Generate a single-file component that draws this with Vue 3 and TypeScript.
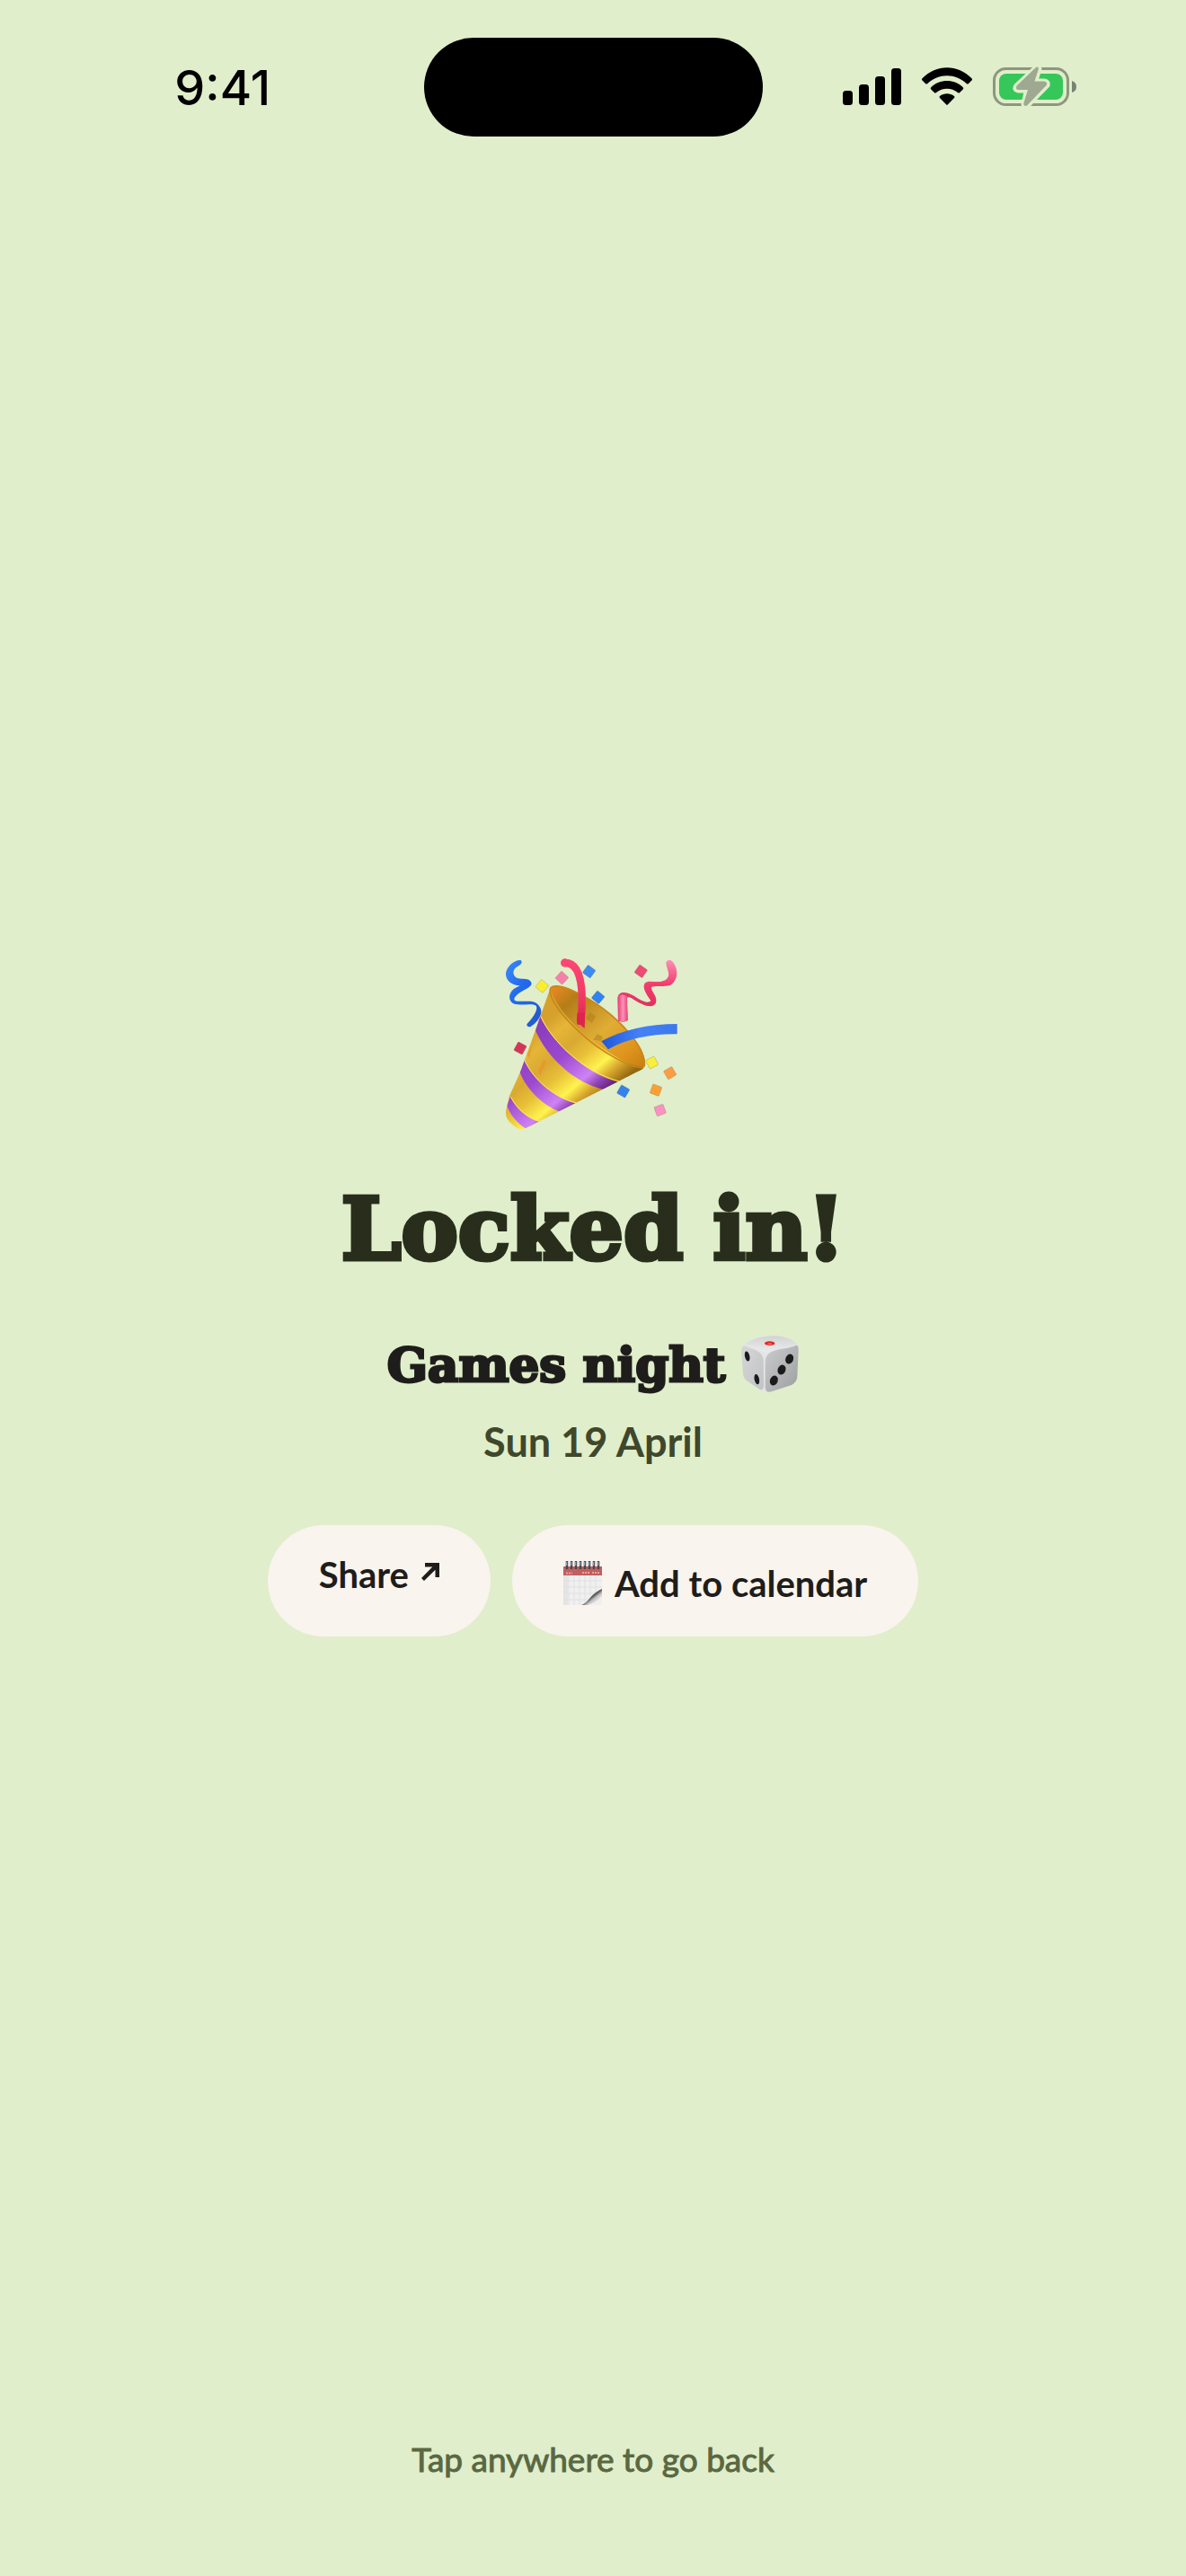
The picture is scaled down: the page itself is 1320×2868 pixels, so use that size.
<script setup lang="ts">
import { ref } from 'vue'

interface Piece {
  x: number
  y: number
  angle: number
  fill: string
}

const eventName = ref('Games night')
const eventDate = ref('Sun 19 April')

const confetti: Piece[] = [
  { x: 190, y: 171, angle: 40, fill: '#fbee2c' },
  { x: 256, y: 143, angle: 43, fill: '#f97fab' },
  { x: 347, y: 122, angle: 36, fill: '#3c8bf4' },
  { x: 377, y: 208, angle: 40, fill: '#2f83f5' },
  { x: 520, y: 121, angle: 35, fill: '#ee4a74' },
  { x: 117, y: 378, angle: 28, fill: '#d63459' },
  { x: 557, y: 426, angle: 62, fill: '#f9ee3a' },
  { x: 617, y: 461, angle: 60, fill: '#fb9d45' },
  { x: 570, y: 518, angle: 20, fill: '#fca033' },
  { x: 461, y: 522, angle: 30, fill: '#3482ee' },
  { x: 584, y: 585, angle: 70, fill: '#fb92c2' },
]

const bars = [
  { x: 0, h: 16 },
  { x: 18, h: 23 },
  { x: 36, h: 32 },
  { x: 54, h: 41 },
]

const rings = [0, 1, 2, 3, 4, 5, 6, 7].map((i) => 3 + i * 5)
</script>

<template>
  <div class="screen">
    <header class="status">
      <time class="clock">9:41</time>
      <div class="island"></div>
      <div class="indicators">
        <svg class="signal" viewBox="0 0 65 43" aria-label="Signal">
          <rect v-for="b in bars" :key="b.x" :x="b.x" :y="42 - b.h" width="11" :height="b.h" rx="3.5" />
        </svg>
        <svg class="wifi" viewBox="0 0 58 43" aria-label="Wi-Fi">
          <path d="M1.5 12.2C17-3.9 41-3.9 56.500 12.200Q57.700 13.500 56.500 14.600L53 18Q51.800 19 50.700 18C38.500 6.400 19.500 6.400 7.300 18Q6.200 19 5 18L1.500 14.600Q.3 13.500 1.500 12.200Z" />
          <path d="M11.200 22.200C21 12.700 37 12.700 46.800 22.200Q47.900 23.300 46.800 24.400L43.200 28Q42.100 29 41 28C34 22.200 24 22.200 17 28Q15.900 29 14.800 28L11.200 24.400Q10.100 23.300 11.200 22.200Z" />
          <path d="M21 32C25.500 28.300 32.500 28.300 37 32Q38.100 33 37 34L30 41.200Q29 42.200 28 41.200L21 34Q19.900 33 21 32Z" />
        </svg>
        <svg class="battery" viewBox="0 0 94 47" aria-label="Battery charging">
          <rect x="1.500" y="3.500" width="82" height="40" rx="13" fill="none" stroke="#8d967e" stroke-width="3" />
          <rect x="7" y="9" width="71" height="29" rx="8" fill="#35c759" />
          <path d="M88 17Q93 18.500 93 23.500T88 30Z" fill="#7b8370" />
          <path d="M48.500 2 26 23Q24 27 28 27.500H38L34.500 43Q36 47 39 44L60.500 22Q61.500 18 57.500 17.500H47L51.500 4Q51 1 48.500 2Z" fill="#9fa991" stroke="#e0eecb" stroke-width="6" stroke-linejoin="round" />
          <path d="M48 2 26.500 22.500Q25 26.500 28 27H39L34 43Q36 46.500 38.500 44L60 21.500Q61 18 57 17.500H46.500L51 3.500Q50.500 .5 48 2Z" fill="#9fa991" />
        </svg>
      </div>
    </header>

    <main class="content">
      <svg class="popper" viewBox="0 0 720 720" role="img" aria-label="Party popper">
        <defs>
          <linearGradient id="gold" gradientUnits="userSpaceOnUse" x1="155" y1="330" x2="360" y2="570">
            <stop offset="0" stop-color="#d6a02c" />
            <stop offset=".16" stop-color="#e5b637" />
            <stop offset=".35" stop-color="#d9a932" />
            <stop offset=".52" stop-color="#e8bf38" />
            <stop offset=".72" stop-color="#fff34f" />
            <stop offset=".84" stop-color="#dbab30" />
            <stop offset="1" stop-color="#96680f" />
          </linearGradient>
          <linearGradient id="violet" gradientUnits="userSpaceOnUse" x1="155" y1="330" x2="360" y2="570">
            <stop offset="0" stop-color="#8b3dbd" />
            <stop offset=".4" stop-color="#9c49ce" />
            <stop offset=".72" stop-color="#cf82f4" />
            <stop offset=".84" stop-color="#9146b5" />
            <stop offset="1" stop-color="#591672" />
          </linearGradient>
          <linearGradient id="inside" x1="0" y1="0" x2="1" y2="1">
            <stop offset="0" stop-color="#f08a25" />
            <stop offset=".2" stop-color="#b57d18" />
            <stop offset=".55" stop-color="#dfad35" />
            <stop offset=".8" stop-color="#e0951e" />
            <stop offset="1" stop-color="#c77e10" />
          </linearGradient>
          <linearGradient id="red" x1="0" y1="0" x2="0" y2="1">
            <stop offset="0" stop-color="#fc4772" />
            <stop offset=".6" stop-color="#ef3764" />
            <stop offset="1" stop-color="#d91f4b" />
          </linearGradient>
          <linearGradient id="blue" x1="0" y1="0" x2="1" y2="0">
            <stop offset="0" stop-color="#2058d8" />
            <stop offset=".5" stop-color="#4580f8" />
            <stop offset="1" stop-color="#3c78ec" />
          </linearGradient>
          <linearGradient id="azure" x1="0" y1="0" x2="1" y2="1">
            <stop offset="0" stop-color="#3c8bfb" />
            <stop offset=".4" stop-color="#236aed" />
            <stop offset="1" stop-color="#2359c9" />
          </linearGradient>
          <linearGradient id="rose" x1="0" y1="0" x2="0" y2="1">
            <stop offset="0" stop-color="#fc91b5" />
            <stop offset=".4" stop-color="#f13c6d" />
            <stop offset="1" stop-color="#d62954" />
          </linearGradient>
          <linearGradient id="tail" x1="0" y1="0" x2="1" y2="0">
            <stop offset="0" stop-color="#e94576" />
            <stop offset=".5" stop-color="#fb91b8" />
            <stop offset="1" stop-color="#e94576" />
          </linearGradient>
          <clipPath id="coneShape">
            <path d="M218 176C230 230 295 310 385 373C435 410 495 440 530 441C529 447 520 452 508 457L176 625L142 643Q118 657 94 636Q66 614 69 588L80 540L118 455L160 340Z" />
          </clipPath>
        </defs>

        <path d="M217 181C223 164 260 167 313 196C385 233 455 290 502 355C535 400 542 439 526 442C495 449 390 397 317 326C252 267 210 210 217 181Z" fill="url(#inside)" />
        <path d="M336 278l14-20 20 14-14 22zM360 350l14-20 18 10-4 14z" fill="#a8781d" opacity=".45" />
        <g clip-path="url(#coneShape)">
          <path d="M50 150H550V680H50Z" fill="url(#gold)" />
          <path d="M183 270C220 355 330 460 443 491L395 516C300 495 205 408 168 319Z" fill="url(#violet)" />
          <path d="M129 415C160 485 230 545 307 564L250 590C190 569 132 510 113 450Z" fill="url(#violet)" />
          <path d="M84 540C102 580 142 615 182 624L134 646C105 626 83 600 73 570Z" fill="url(#violet)" />
          <g fill="none" stroke="#ffe76b" stroke-width="3">
            <path d="M186 272C222 355 330 458 448 489M131 417C162 485 230 543 309 562M85 540C105 580 143 613 184 622" />
          </g>
          <path d="M178 455l18-40 8 8-21 49zM140 400l17-38-8 50z" fill="#f28a25" opacity=".5" />
        </g>
        <path d="M217 181C222 164 260 167 313 196C385 233 455 290 502 355C530 393 540 438 526 442C495 448 390 395 317 326C252 267 212 210 217 181Z" fill="none" stroke="#c88717" stroke-width="5" />

        <path d="M266 93C305 92 320 135 323 198Q324 250 319 300" fill="none" stroke="url(#red)" stroke-width="25" />
        <circle cx="266" cy="93" r="14" fill="#fc4772" />
        <path d="M306 290L332 312 333 260H307Z" fill="#df234f" />
        <path d="M388 355C455 318 545 297 641 297V331C550 330 471 347 411 382Z" fill="url(#blue)" />

        <path d="M119 84C128 94 116 101 104 107C88 120 93 140 110 145C124 149 145 142 154 158C160 177 116 183 98 209C91 229 129 218 157 222C177 226 189 245 187 259C184 280 165 299 152 306Q139 309 139 298C160 276 176 252 171 238C164 227 134 235 108 232C83 231 75 208 86 191C96 176 109 174 116 169C89 169 68 151 69 130C69 108 96 82 119 84Z" fill="url(#azure)" />
        <path d="M604 91C613 76 626 83 634 102C645 125 640 148 625 163C609 178 573 166 555 174C552 188 579 205 569 229C557 248 520 231 500 218C484 206 476 205 473 211L476 285Q460 295 444 286L442 211C445 185 472 190 491 200C515 214 542 233 553 220C543 202 522 179 533 161C546 147 576 164 601 151C626 135 603 113 604 91Z" fill="url(#rose)" />
        <path d="M444 205Q458 194 474 205L476 285Q460 293 444 286Z" fill="url(#tail)" />

        <rect
          v-for="(p, i) in confetti"
          :key="i"
          :x="p.x - 16"
          :y="p.y - 16"
          width="32"
          height="32"
          rx="3"
          :fill="p.fill"
          stroke="#6b5b30"
          stroke-opacity=".35"
          stroke-width="2"
          :transform="`rotate(${p.angle} ${p.x} ${p.y})`"
        />
      </svg>

      <h1 class="title">Locked in!</h1>

      <h2 class="event">
        <span>{{ eventName }}</span>
        <svg class="die" viewBox="0 0 192 192" role="img" aria-label="Game die">
          <defs>
            <linearGradient id="dieTop" x1="0" y1="0" x2="0" y2="1">
              <stop offset="0" stop-color="#d2d3d2" />
              <stop offset="1" stop-color="#ebecec" />
            </linearGradient>
            <linearGradient id="dieLeft" x1="0" y1="0" x2="1" y2="1">
              <stop offset="0" stop-color="#d5d6d6" />
              <stop offset="1" stop-color="#c2c3c4" />
            </linearGradient>
            <linearGradient id="dieRight" x1="0" y1="0" x2="1" y2="1">
              <stop offset="0" stop-color="#cbcccd" />
              <stop offset="1" stop-color="#9d9e9f" />
            </linearGradient>
          </defs>
          <path d="M20 20C45 6 80 0 112 1C142 2 168 10 183 24Q192 31 192 48L187 137Q185 156 168 165L101 188Q82 194 65 184L22 154Q8 145 6 129L0 53Q-1 32 20 20Z" fill="#e4e5e5" />
          <path d="M11 29C38 10 76 1 112 1C142 2 174 13 187 29C160 39 127 39 106 48Q88 57 79 55C54 49 31 37 11 29Z" fill="url(#dieTop)" />
          <path d="M3 40C5 31 11 34 31 42C56 50 74 60 74 83L75 169Q74 184 62 180L22 153Q8 144 6 128L0 53Z" fill="url(#dieLeft)" />
          <path d="M191 48L187 137Q185 156 168 165L101 187Q82 193 80 174V85C82 65 93 56 112 50C140 42 164 42 180 34Q191 28 191 48Z" fill="url(#dieRight)" />
          <ellipse cx="95" cy="26" rx="17" ry="7" fill="#df2524" />
          <ellipse cx="95" cy="28" rx="8" ry="3" fill="#ff6b5a" />
          <g fill="#1b1b1b">
            <ellipse cx="20" cy="69" rx="8" ry="17" transform="rotate(-12 20 69)" />
            <ellipse cx="52" cy="146" rx="8" ry="17" transform="rotate(-12 52 146)" />
            <ellipse cx="161" cy="78" rx="13" ry="17" transform="rotate(20 161 78)" />
            <ellipse cx="135" cy="114" rx="13" ry="17" transform="rotate(20 135 114)" />
            <ellipse cx="109" cy="150" rx="13" ry="17" transform="rotate(20 109 150)" />
          </g>
        </svg>
      </h2>

      <p class="date">{{ eventDate }}</p>

      <div class="actions">
        <button type="button" class="pill share">
          <span>Share</span>
          <svg class="arrow" viewBox="0 0 20 20" aria-hidden="true">
            <path d="M4 0H20V16H15.500V7.700L3 20 0 17 12.300 4.500H4Z" fill="#1f1d1b" />
          </svg>
        </button>
        <button type="button" class="pill">
          <svg class="calendar" viewBox="0 0 43 49" aria-hidden="true">
            <defs>
              <linearGradient id="curl" x1="0" y1="0" x2="1" y2="1">
                <stop offset=".3" stop-color="#f4f4f4" />
                <stop offset=".5" stop-color="#555" />
                <stop offset=".62" stop-color="#c4c4c4" />
                <stop offset=".85" stop-color="#f7f5f2" />
              </linearGradient>
            </defs>
            <rect y="6" width="43" height="43" fill="#f0f0f0" />
            <path d="M0 16H5V49H0Z" fill="#e4e4e4" />
            <path d="M6 16V49M12 16V49M18 16V49M24 16V49M30 16V49M36 16V49M0 22H43M0 29H43M0 36H43M0 43H43" stroke="#e0e0e0" stroke-width="1" />
            <rect y="6" width="43" height="10" fill="#c15f60" />
            <path d="M3 13.500H10M21 13H29M32 13H41" stroke="#e0a5a3" stroke-width="2" stroke-dasharray="2 1" />
            <path d="M20 49C30 45 29 37 43 31V49Z" fill="url(#curl)" />
            <path d="M27 49Q38 46 43 38V49Z" fill="#f1efed" />
            <g v-for="x in rings" :key="x">
              <path :d="`M${x + 1} 0V9`" stroke="#4c4748" stroke-width="2.500" />
              <path :d="`M${x + .5} 1V5`" stroke="#8ba7b9" stroke-width="1.500" />
            </g>
          </svg>
          <span>Add to calendar</span>
        </button>
      </div>
    </main>

    <footer class="footer">
      <button type="button" class="back">Tap anywhere to go back</button>
    </footer>
  </div>
</template>

<style>
body {
  background: #e0eecb;
}
</style>

<style scoped>
.screen {
  display: flex;
  flex-direction: column;
  min-height: 100vh;
  background: #e0eecb;
  color: #1f1d1b;
  font-family: Lato, "Liberation Sans", sans-serif;
}

.status {
  display: grid;
  grid-template-columns: 1fr auto 1fr;
  align-items: start;
  height: 126px;
  padding-top: 42px;
}

.clock {
  justify-self: center;
  margin-top: 24px;
  padding-left: 24px;
  color: #000;
  font: 500 54px/64px Inter, sans-serif;
}

.island {
  width: 377px;
  height: 110px;
  border-radius: 60px;
  background: #000;
}

.indicators {
  display: flex;
  align-items: center;
  justify-content: flex-end;
  gap: 22px;
  margin-top: 31px;
  padding-right: 121px;
}

.signal {
  width: 65px;
  height: 43px;
}

.wifi {
  width: 58px;
  height: 43px;
}

.battery {
  width: 94px;
  height: 47px;
}

.content {
  display: flex;
  flex: 1;
  flex-direction: column;
  align-items: center;
  justify-content: center;
}

.popper {
  width: 240px;
  height: 240px;
}

.title,
.event {
  margin: 0;
  font-family: "DejaVu Serif", serif;
  font-weight: 700;
  stroke-linejoin: round;
}

.title {
  margin-top: 28px;
  color: #282d1c;
  font-size: 95px;
  line-height: 120px;
  -webkit-text-stroke: 5px currentColor;
}

.event {
  display: flex;
  align-items: center;
  gap: 18px;
  margin-top: 54px;
  font-size: 53px;
  line-height: 72px;
  -webkit-text-stroke: 3px currentColor;
}

.die {
  width: 64px;
  height: 64px;
}

.date {
  margin: 22px 0 0;
  color: #3f472c;
  font-size: 45px;
  font-weight: 700;
  line-height: 56px;
}

.actions {
  display: flex;
  gap: 24px;
  margin-top: 65px;
}

.pill {
  display: flex;
  align-items: center;
  gap: 14px;
  height: 124px;
  padding: 6px 57px 0;
  border: 0;
  border-radius: 62px;
  background: #f9f4ee;
  color: #1f1d1b;
  font: 700 40px/48px Lato, sans-serif;
}

.share {
  align-items: flex-start;
  padding-top: 31px;
}

.arrow {
  width: 20px;
  height: 20px;
  margin-top: 11px;
}

.calendar {
  width: 43px;
  height: 49px;
}

.footer {
  display: flex;
  align-items: flex-start;
  justify-content: center;
  height: 174px;
}

.back {
  margin-top: 20px;
  padding: 0;
  border: 0;
  background: none;
  color: #5a6842;
  font: 400 37px/48px Lato, sans-serif;
  -webkit-text-stroke: 1px currentColor;
}
</style>
